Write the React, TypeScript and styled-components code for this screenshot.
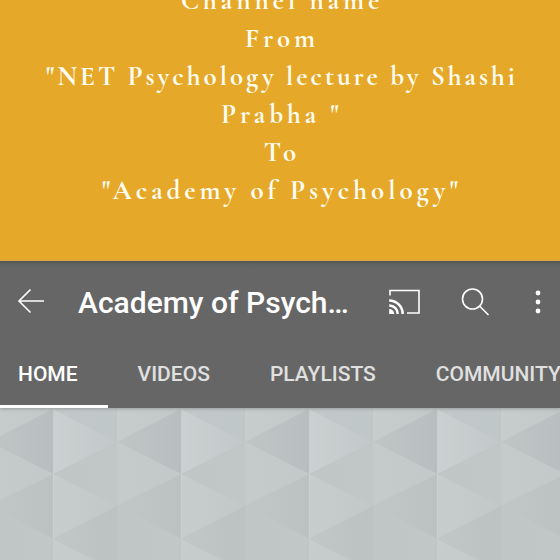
import React from "react";
import styled, { createGlobalStyle } from "styled-components";

const GlobalStyle = createGlobalStyle`
  * { box-sizing: border-box; }
  body { margin: 0; background: #c2c7c8; }
`;

const Page = styled.main`
  display: flex;
  flex-direction: column;
  min-height: 100vh;
  overflow: hidden;
`;

const Banner = styled.section`
  overflow: hidden;
  padding: 0 0 51px 4px;
  background: #e6a829;
`;

const Announcement = styled.p`
  margin: -18px 0 0;
  color: #fffdf2;
  font-family: "Cormorant Garamond", "Liberation Serif", serif;
  font-size: 27px;
  font-weight: 700;
  line-height: 38px;
  text-align: center;
`;

const Line = styled.span<{ $long: boolean }>`
  display: block;
  letter-spacing: ${(p) => (p.$long ? "3px" : "4px")};
`;

const ChannelHeader = styled.header`
  position: relative;
  background: linear-gradient(#505655, #626564 4px, #666 10px);
  box-shadow: 0 1px 3px #9a9e9e;
  font-family: Roboto, sans-serif;
`;

const Toolbar = styled.div`
  display: flex;
  align-items: center;
  height: 82px;
  padding: 0 11px 0 15px;
`;

const IconButton = styled.button`
  display: flex;
  flex: none;
  padding: 0;
  border: 0;
  background: none;
  color: #fff;
`;

const Title = styled.h1`
  flex: 1;
  margin: 0 0 0 31px;
  padding-top: 2px;
  color: #fff;
  font-size: 30px;
  font-weight: 500;
  line-height: 42px;
  white-space: nowrap;
`;

const Actions = styled.div`
  display: flex;
  align-items: center;
  gap: 36px;
`;

const Tabs = styled.nav`
  display: flex;
  overflow: hidden;
`;

const Tab = styled.a<{ $active?: boolean }>`
  flex: none;
  height: 65px;
  padding: 18px 30px 0;
  border-bottom: 3px solid ${(p) => (p.$active ? "#fff" : "transparent")};
  color: ${(p) => (p.$active ? "#fff" : "#e0e0e0")};
  font-size: 21px;
  font-weight: 500;
  line-height: 26px;
  text-decoration: none;
  &:first-child { padding-left: 18px; }
  &:last-child { padding-right: 0; }
`;

const Cover = styled.section`
  display: flex;
  flex: 1;
  min-height: 152px;
`;

const Facets = styled.svg`
  flex: 1;
  min-width: 0;
`;

const lines = [
  "Channel name",
  "From",
  '"NET Psychology lecture by Shashi',
  'Prabha "',
  "To",
  '"Academy of Psychology"',
];

const tabs = ["HOME", "VIDEOS", "PLAYLISTS", "COMMUNITY"];

const gradients: [string, string, string][] = [
  ["bright", "#cbd0d1", "#c2c8c9"],
  ["light", "#c7cccd", "#c2c7c8"],
  ["teal", "#c3c8c9", "#bfc7c8"],
  ["mid", "#c0c5c6", "#c2c6c7"],
  ["dark", "#c0c5c6", "#b8bebf"],
  ["dim", "#c1c6c7", "#bcc1c2"],
  ["pale", "#c5cacb", "#c3c8c9"],
];

const facets: [string, string][] = [
  ["0,1 64,-31 64,34", "teal"],
  ["0,1 0,66 64,34", "bright"],
  ["0,66 64,34 64,98", "mid"],
  ["0,66 0,131 64,98", "light"],
  ["0,131 64,98 64,163", "dim"],
  ["0,131 0,195 64,163", "light"],
  ["64,-31 64,34 128,1", "light"],
  ["64,34 128,1 128,66", "dark"],
  ["64,34 64,98 128,66", "pale"],
  ["64,98 128,66 128,131", "dim"],
  ["64,98 64,163 128,131", "mid"],
  ["64,163 128,131 128,195", "mid"],
];

export default function App() {
  return (
    <Page>
      <GlobalStyle />
      <Banner>
        <Announcement>
          {lines.map((line) => <Line key={line} $long={line.length > 30}>{line}</Line>)}
        </Announcement>
      </Banner>
      <ChannelHeader>
        <Toolbar>
          <IconButton aria-label="Back">
            <svg width="32" height="32" viewBox="0 0 32 32" fill="none" stroke="currentColor" strokeWidth="1.6">
              <path d="M29 15H4M15.5 3.5L4 15l11.5 11.5" />
            </svg>
          </IconButton>
          <Title>Academy of Psych…</Title>
          <Actions>
            <IconButton aria-label="Cast">
              <svg width="36" height="32" viewBox="0 0 36 32" fill="none" stroke="currentColor">
                <path d="M3 9.5V4.5H32V27H20" strokeWidth="1.6" />
                <path d="M2.2 14.5A13.5 13.5 0 0 1 15.7 28M2.2 19.5A8.5 8.5 0 0 1 10.7 28" strokeWidth="2.5" />
                <path d="M2.2 23A5 5 0 0 1 7.2 28H2.2Z" fill="currentColor" stroke="none" />
              </svg>
            </IconButton>
            <IconButton aria-label="Search">
              <svg width="32" height="32" viewBox="0 0 32 32" fill="none" stroke="currentColor" strokeWidth="1.6">
                <circle cx="13.5" cy="13" r="10" />
                <path d="M20.5 20l9 9" />
              </svg>
            </IconButton>
            <IconButton aria-label="More options">
              <svg width="22" height="32" viewBox="0 0 22 32" fill="currentColor">
                <circle cx="11" cy="7" r="2.4" />
                <circle cx="11" cy="16" r="2.4" />
                <circle cx="11" cy="25" r="2.4" />
              </svg>
            </IconButton>
          </Actions>
        </Toolbar>
        <Tabs aria-label="Channel sections">
          {tabs.map((tab, i) => (
            <Tab key={tab} href={`#${tab.toLowerCase()}`} $active={i === 0}>{tab}</Tab>
          ))}
        </Tabs>
      </ChannelHeader>
      <Cover aria-label="Channel cover">
        <Facets aria-hidden="true">
          <defs>
            {gradients.map(([id, from, to]) => (
              <linearGradient key={id} id={id}>
                <stop offset="0" stopColor={from} />
                <stop offset="1" stopColor={to} />
              </linearGradient>
            ))}
            <pattern id="facets" x="53" y="0" width="128" height="195" patternUnits="userSpaceOnUse">
              <rect width="128" height="195" fill="#c2c6c7" />
              {facets.map(([points, fill]) => (
                <polygon key={points} points={points} fill={`url(#${fill})`} />
              ))}
              <path d="M0.5 1V131" stroke="#cad0d1" />
            </pattern>
          </defs>
          <rect width="100%" height="100%" fill="url(#facets)" />
        </Facets>
      </Cover>
    </Page>
  );
}
